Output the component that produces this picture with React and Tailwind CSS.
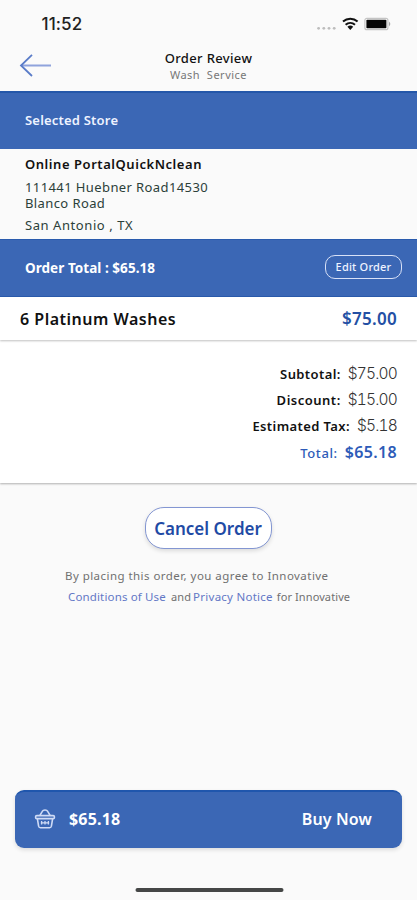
import React from "react";

function StatusIcons() {
  return (
    <svg className="h-[16px] w-[78px]" viewBox="0 0 78 16" fill="none">
      <g fill="#bdbdbd">
        <circle cx="2.6" cy="12.3" r="1.4" />
        <circle cx="7.8" cy="12.3" r="1.4" />
        <circle cx="13" cy="12.3" r="1.4" />
        <circle cx="18.2" cy="12.3" r="1.4" />
      </g>
      <g stroke="#111" strokeWidth="2">
        <path d="M27 5.6a11 11 0 0 1 14.6 0" />
        <path d="M29.6 8.7a7.2 7.2 0 0 1 9.4 0" />
      </g>
      <path d="M31.4 10.8a4.6 4.6 0 0 1 5.8 0L34.3 13.9z" fill="#111" />
      <rect x="48.9" y="2.3" width="23" height="11.4" rx="2" fill="#fff" stroke="#c4c4c4" strokeWidth="1.2" />
      <rect x="50.4" y="3.8" width="20" height="8.4" rx="0.8" fill="#050505" />
      <path d="M73 5.6q2.6 2.4 0 4.8z" fill="#a5a5a5" />
    </svg>
  );
}

function BackArrow() {
  return (
    <svg className="h-[24px] w-[34px]" viewBox="0 0 34 24" fill="none" strokeWidth="1.8">
      <path d="M2 12.5H32" stroke="#8fa3dc" strokeWidth="2" />
      <path d="M13 1.8L2 12.5L13 23" stroke="#5a7cc8" />
    </svg>
  );
}

function Basket() {
  return (
    <svg className="h-[22px] w-[22px]" viewBox="0 0 22 22" fill="none" stroke="#cfdbf6" strokeWidth="1.6">
      <path d="M5.8 7.6L8.3 3.4Q9 2 11 2T13.7 3.4L16.2 7.6" />
      <rect x="1.6" y="7.6" width="18.8" height="3" rx="1.2" />
      <path d="M3.4 10.8L4.6 18.2Q4.9 19.7 6.4 19.7H15.6Q17.1 19.7 17.4 18.2L18.6 10.8" />
      <path d="M7.6 13V16.6M11 13V16.6M14.4 13V16.6M6.8 14.8H15.2" strokeWidth="1.3" />
    </svg>
  );
}

function SummaryRow({ label, value, className = "" }) {
  return (
    <div className={"flex h-[26px] items-baseline justify-end leading-[26px] " + className}>
      {label}
      {value}
    </div>
  );
}

function Amount({ children }) {
  return (
    <span className="ml-[7px] font-['Inter',sans-serif] text-[15.5px] font-light tabular-nums tracking-[-0.8px] text-[#333]">
      {children}
    </span>
  );
}

export default function App() {
  return (
    <div className="flex h-[900px] w-[417px] flex-col overflow-hidden whitespace-nowrap bg-[#fafafa] font-['Noto_Sans',sans-serif] text-black">
      <div className="flex h-[48px] items-center justify-between pr-[23px] pl-[41.5px]">
        <span className="pt-[2px] font-['Inter',sans-serif] text-[17px] font-medium tracking-[0.1px] text-[#222]">11:52</span>
        <StatusIcons />
      </div>
      <header className="grid h-[43px] grid-cols-[80px_1fr_80px]">
        <div className="pt-[5px] pl-[19px]"><BackArrow /></div>
        <div className="flex flex-col items-center">
          <span className="mt-px text-[13px] leading-[18px] font-medium tracking-[0.35px] text-[#111]">Order Review</span>
          <span className="text-[11px] leading-[15px] tracking-[0.5px] whitespace-pre text-[#777]">Wash  Service</span>
        </div>
      </header>

      <div className="h-[58px] border-t-2 border-[#2457a9] bg-[#3b67b5] pl-[25px] text-[13px] leading-[54px] font-semibold tracking-[0.2px] text-[#eef3ff]">
        Selected Store
      </div>
      <section className="h-[90px] pt-[5px] pl-[25px] text-[13px] leading-[16px] text-[#2b4039]">
        <p className="leading-[20px] font-semibold tracking-[0.55px] text-[#111]">Online PortalQuickNclean</p>
        <p className="mt-[5px] tracking-[0.4px]">
          111441 Huebner Road14530
          <br />
          Blanco Road
        </p>
        <p className="mt-[6px] tracking-[0.57px]">San Antonio , TX</p>
      </section>
      <div className="flex h-[58px] items-center justify-between border-t border-b border-[#2a5bad] bg-[#3b67b5] pr-[15px] pl-[25px]">
        <span className="text-[13.5px] font-bold tracking-[0.05px] text-white">Order Total : $65.18</span>
        <button className="-mt-[2px] h-[24px] w-[77px] rounded-[10px] border border-[#d8e1f7] text-[11px] leading-[22px] font-medium tracking-[0.2px] text-[#eef3ff]">Edit Order</button>
      </div>

      <div className="z-10 flex h-[43px] items-center justify-between bg-white pr-[20px] pl-[20px] shadow-[0_1px_2px_rgba(0,0,0,0.25)]">
        <span className="text-[16px] font-semibold tracking-[0.5px] text-[#111]">6 Platinum Washes</span>
        <span className="text-[17px] font-semibold tracking-[0.3px] text-[#2450a4]">$75.00</span>
      </div>
      <section className="h-[143px] bg-white pt-[21px] pr-[20px] text-[13px] font-semibold text-[#111] shadow-[0_1px_2px_rgba(0,0,0,0.3)]">
        <SummaryRow label={<span className="tracking-[0.4px]">Subtotal:</span>} value={<Amount>$75.00</Amount>} />
        <SummaryRow label={<span className="tracking-[0.5px]">Discount:</span>} value={<Amount>$15.00</Amount>} />
        <SummaryRow label={<span className="tracking-[0.4px]">Estimated Tax:</span>} value={<Amount>$5.18</Amount>} />
        <SummaryRow
          className="text-[#2d5bb8]"
          label={<span className="font-medium tracking-[0.6px]">Total:</span>}
          value={<span className="ml-[7px] text-[16px] tracking-[0.35px]">$65.18</span>}
        />
      </section>

      <button className="mt-[24px] mr-px h-[42px] w-[127px] shrink-0 self-center rounded-[19px] border border-[#8396d2] bg-white pt-[2px] text-[17px] leading-[38px] font-semibold text-[#1f4ba5] shadow-[0_2px_4px_rgba(0,0,0,0.13)]">
        Cancel Order
      </button>
      <div className="mt-[17px] text-[11.5px] leading-[20.5px] text-[#707070]">
        <p className="pl-[65px] tracking-[0.45px]">By placing this order, you agree to Innovative</p>
        <p className="flex pl-[68px] tracking-[0.15px]">
          <a className="text-[#6277c6]">Conditions of Use</a>
          <span className="ml-[5px] text-[11px]">and</span>
          <a className="ml-[2px] tracking-[0.25px] text-[#6277c6]">Privacy Notice</a>
          <span className="ml-[4px] text-[11px] tracking-[0.1px]">for Innovative</span>
        </p>
      </div>

      <button className="mx-[15px] mt-auto flex h-[58px] shrink-0 items-center rounded-[9px] border-t-2 border-[#1f56ad] bg-[#3b67b5] pr-[30px] pb-[2px] pl-[19px] text-[16px] font-semibold text-white shadow-[0_2px_4px_rgba(0,0,0,0.12)]">
        <Basket />
        <span className="ml-[13px] font-bold tracking-[0.2px]">$65.18</span>
        <span className="ml-auto tracking-[0.15px]">Buy Now</span>
      </button>
      <div className="mt-[40px] mb-[8px] h-[4px] w-[148px] shrink-0 translate-x-[0.5px] self-center rounded-full bg-[#454746]" />
    </div>
  );
}
